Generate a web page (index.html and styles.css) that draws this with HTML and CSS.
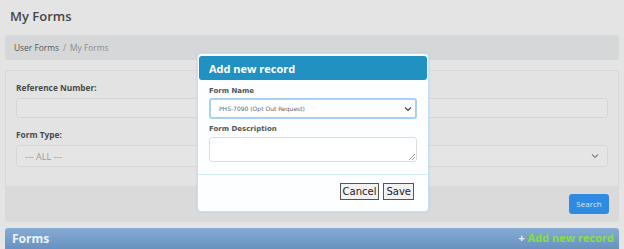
FILE: index.html
```html
<!DOCTYPE html>
<html lang="en">
<head>
  <meta charset="UTF-8">
  <title>My Forms</title>
  <link rel="stylesheet" href="styles.css">
</head>
<body>

  <h1 class="page-title">My Forms</h1>

  <div class="breadcrumb">
    <span class="crumb">User Forms</span>
    <span class="sep">/</span>
    <span class="crumb current">My Forms</span>
  </div>

  <div class="search-panel">
    <div class="panel-body">
      <label class="field-label">Reference Number:</label>
      <div class="field-input"></div>
      <label class="field-label">Form Type:</label>
      <div class="field-input field-select">
        <span>--- ALL ---</span>
        <svg width="8" height="6" viewBox="0 0 8 6"><path d="M1 1.5 L4 4.5 L7 1.5" fill="none" stroke="#888" stroke-width="1.2"/></svg>
      </div>
    </div>
    <div class="panel-footer">
      <button class="search-btn">Search</button>
    </div>
  </div>

  <div class="forms-bar">
    <span class="forms-title">Forms</span>
    <span class="add-link"><span class="plus">+</span> Add new record</span>
  </div>

  <!-- popup -->
  <div class="modal">
    <div class="modal-header">Add new record</div>
    <div class="modal-body">
      <label class="modal-label">Form Name</label>
      <div class="modal-select">
        <span>PHS-7090 (Opt Out Request)</span>
        <svg width="8" height="6" viewBox="0 0 8 6"><path d="M1 1.5 L4 4.5 L7 1.5" fill="none" stroke="#444" stroke-width="1.2"/></svg>
      </div>
      <label class="modal-label">Form Description</label>
      <div class="modal-textarea">
        <svg class="grip" width="6" height="6" viewBox="0 0 6 6"><path d="M0 6 L6 0 M3 6 L6 3" stroke="#888" stroke-width="0.8"/></svg>
      </div>
    </div>
    <div class="modal-footer">
      <button class="plain-btn">Cancel</button>
      <button class="plain-btn">Save</button>
    </div>
  </div>

</body>
</html>
```

FILE: styles.css
```css
body {
  margin: 0;
  padding: 0 5px;
  background: #e4e4e4;
  font-family: 'Open Sans', 'Noto Sans', sans-serif;
  color: #4a4a4a;
  height: 249px;
  overflow: hidden;
  position: relative;
}

.page-title {
  margin: 0;
  padding: 5px 5px 0;
  height: 30px;
  box-sizing: border-box;
  font-size: 13px;
  line-height: 22px;
  font-weight: 600;
  color: #474747;
}

.breadcrumb {
  display: flex;
  align-items: center;
  gap: 4px;
  margin-top: 5px;
  height: 25px;
  padding: 0 9px;
  background: #d6d7d8;
  border-radius: 3px;
  font-size: 8.4px;
  color: #555;
}

.breadcrumb .sep,
.breadcrumb .current {
  color: #8d8d8d;
}

.search-panel {
  margin-top: 10px;
  border: 1px solid #d9d9d9;
  border-radius: 3px;
  background: #e3e3e3;
  width: 612px;
}

.panel-body {
  padding: 11px 10px 19px;
  display: flex;
  flex-direction: column;
}

.field-label {
  font-size: 8.3px;
  line-height: 11px;
  font-weight: 700;
  color: #4a4a4a;
  margin-bottom: 5px;
}

.field-input {
  height: 18px;
  border: 1px solid #d6d6d6;
  border-radius: 3px;
  background: #e5e5e5;
  margin-bottom: 11px;
}

.field-select {
  height: 20px;
  margin-bottom: 0;
  display: flex;
  align-items: center;
  justify-content: space-between;
  padding: 0 8px;
  font-size: 9px;
  color: #9a9a9a;
}

.panel-footer {
  background: #dadada;
  height: 35px;
  display: flex;
  align-items: center;
  justify-content: flex-end;
  padding: 0 9px;
}

.search-btn {
  width: 40px;
  height: 20px;
  border: none;
  border-radius: 3px;
  background: #2f8be2;
  color: #d8e8f8;
  font-family: 'Open Sans', sans-serif;
  font-size: 8px;
  padding: 0;
}

.forms-bar {
  margin-top: 6px;
  width: 614px;
  height: 22px;
  border-radius: 3px 3px 0 0;
  background: linear-gradient(#86acd5, #6690be);
  display: flex;
  align-items: flex-start;
  justify-content: space-between;
  padding: 2px 5px 0 7px;
  box-sizing: border-box;
}

.forms-title {
  color: #eef2f8;
  font-size: 12px;
  font-weight: 700;
}

.add-link {
  color: #85e03c;
  font-size: 11px;
  font-weight: 700;
}

.add-link .plus {
  color: #e8eef4;
}

/* popup */
.modal {
  position: absolute;
  left: 197px;
  top: 53px;
  width: 230px;
  height: 157px;
  background: #fcfeff;
  border: 1px solid #c4e2f2;
  border-radius: 4px;
  box-shadow: 0 0 2px rgba(150,200,230,0.6);
}

.modal-header {
  margin: 2px 1px 0;
  height: 24px;
  background: #2191c1;
  border-radius: 3px;
  color: #fff;
  font-size: 11px;
  font-weight: 700;
  display: flex;
  align-items: center;
  padding-left: 10px;
}

.modal-body {
  padding: 7px 11px 12px;
  display: flex;
  flex-direction: column;
  border-bottom: 1px solid #d6eaf4;
}

.modal-label {
  font-family: 'DejaVu Sans', Verdana, sans-serif;
  font-size: 7px;
  line-height: 9px;
  font-weight: 700;
  color: #555;
  margin-bottom: 2px;
}

.modal-select {
  height: 17px;
  border: 2px solid #a9d0f7;
  border-radius: 3px;
  background: #fff;
  display: flex;
  align-items: center;
  justify-content: space-between;
  padding: 0 3px 0 8px;
  font-family: 'DejaVu Sans', Verdana, sans-serif;
  font-size: 6px;
  color: #666;
  margin-bottom: 6px;
}

.modal-textarea {
  margin-top: 1px;
  height: 23px;
  border: 1px solid #dcdcdc;
  border-radius: 3px;
  background: #fff;
  position: relative;
}

.modal-textarea .grip {
  position: absolute;
  right: 1px;
  bottom: 1px;
}

.modal-footer {
  display: flex;
  justify-content: flex-end;
  gap: 4px;
  padding: 8px 14px 0;
}

.plain-btn {
  font-family: 'DejaVu Sans', Verdana, sans-serif;
  font-size: 10px;
  color: #222;
  background: #f2f2f2;
  border: 1px solid #555;
  border-radius: 0;
  height: 17px;
  padding: 0 2px;
}
```
